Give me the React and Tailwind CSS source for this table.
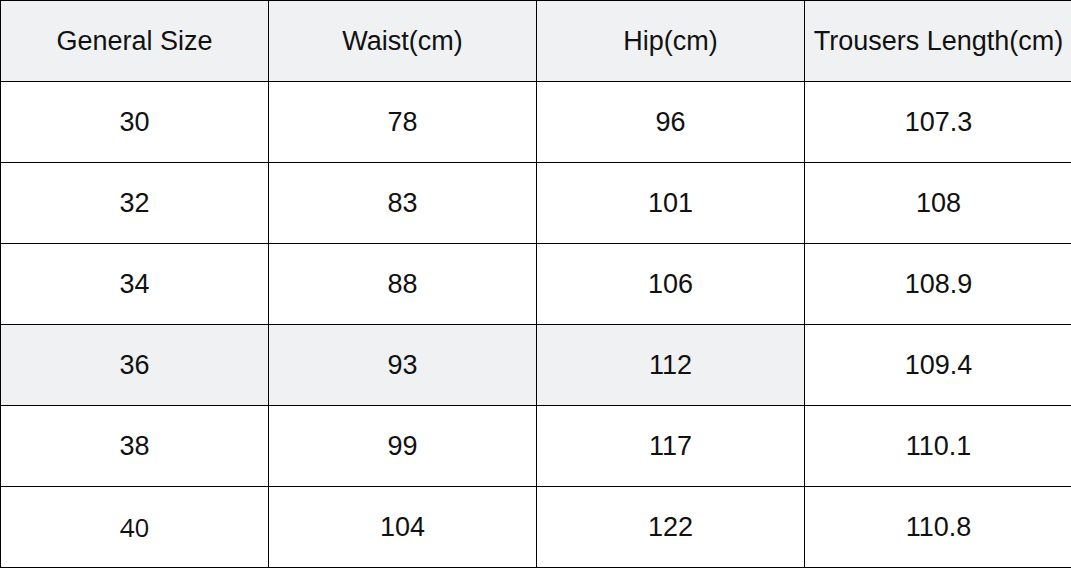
import React from "react";

const header = ["General Size", "Waist(cm)", "Hip(cm)", "Trousers Length(cm)"];
const rows = [
  ["30", "78", "96", "107.3"],
  ["32", "83", "101", "108"],
  ["34", "88", "106", "108.9"],
  ["36", "93", "112", "109.4"],
  ["38", "99", "117", "110.1"],
  ["40", "104", "122", "110.8"],
];

function Cell({ children, gray, alt }) {
  return (
    <div
      className={
        "h-[81px] w-[268px] shrink-0 border-r border-b border-black flex items-center justify-center whitespace-nowrap text-[27px] text-[#111] " +
        (gray ? "bg-[#f0f1f3] " : "bg-white ") +
        (alt ? "font-['Open_Sans',sans-serif]" : "font-['Liberation_Sans',Arial,sans-serif]")
      }
    >
      <span className={alt ? "text-[26px]" : ""}>{children}</span>
    </div>
  );
}

export default function App() {
  return (
    <div className="w-[1071px] h-[569px] overflow-hidden bg-white">
      <div className="w-[1073px] border-t border-l border-black flex flex-col">
        <div className="flex">
          {header.map((h, i) => (
            <Cell key={i} gray>
              {h}
            </Cell>
          ))}
        </div>
        {rows.map((r, ri) => (
          <div className="flex" key={ri}>
            {r.map((v, ci) => (
              <Cell
                key={ci}
                gray={ri === 3 && ci < 3}
                alt={ri === 5 && ci === 0}
              >
                {v}
              </Cell>
            ))}
          </div>
        ))}
      </div>
    </div>
  );
}
